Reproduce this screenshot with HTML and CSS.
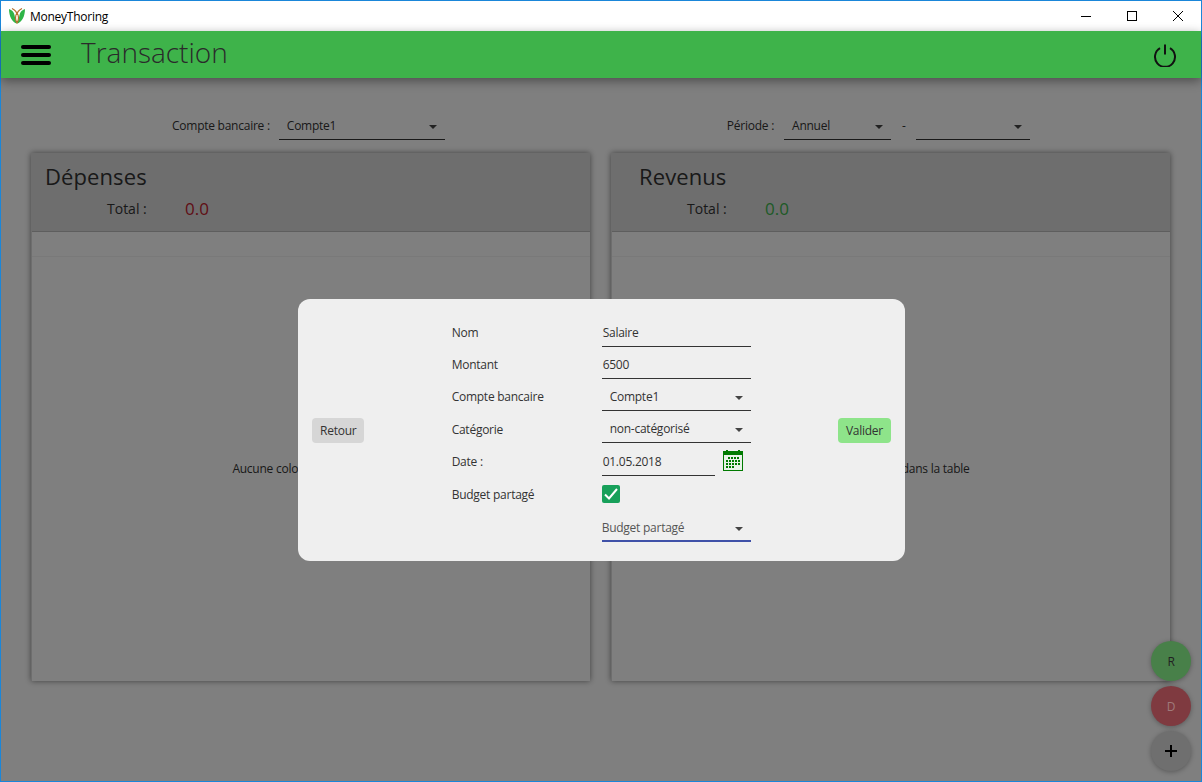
FILE: index.html
```html
<!DOCTYPE html>
<html lang="fr">
<head>
  <meta charset="UTF-8">
  <title>MoneyThoring</title>
  <link rel="stylesheet" href="styles.css">
</head>
<body>

<div id="window">
  <div id="titleBar">
    <svg class="appLogo" viewBox="0 0 16 16" width="16" height="16">
      <path d="M0 1C3 2 5 4 5.500 7C6 10 7 13 8 15.500C3 14.500 0 8 0 1z" fill="#2fb548"/>
      <path d="M16 1C13 2 11 4 10.500 7C10 10 9 13 8 15.500C13 14.500 16 8 16 1z" fill="#2fb548"/>
      <path d="M3 0.500C6 2 8 4 8 7C8 4 10 2 13 0.500M8 5C6 7.500 6 12 8 15C10 12 10 7.500 8 5z" fill="none" stroke="#b5702c" stroke-width="1.200"/>
    </svg>
    <span class="appName">MoneyThoring</span>
    <div class="winButtons">
      <svg width="46" height="30" viewBox="0 0 46 30"><path d="M18 15.500h10" stroke="#000" fill="none"/></svg>
      <svg width="46" height="30" viewBox="0 0 46 30"><rect x="18.500" y="10.500" width="9" height="9" stroke="#000" fill="none"/></svg>
      <svg width="46" height="30" viewBox="0 0 46 30"><path d="M18 10l10 10M28 10L18 20" stroke="#000" fill="none"/></svg>
    </div>
  </div>

  <div id="appBar">
    <div class="burger"><span></span><span></span><span></span></div>
    <h1>Transaction</h1>
    <svg class="power" viewBox="0 0 24 24" width="24" height="24" fill="none" stroke="#111" stroke-width="2">
      <path d="M7 5.200a10 10 0 1 0 10 0"/>
      <path d="M12 1.500v10"/>
    </svg>
  </div>

  <div id="main">
    <div class="filters">
      <div class="filterLeft">
        <label>Compte bancaire :</label>
        <div class="combo w166"><span>Compte1</span><i class="arrow"></i></div>
      </div>
      <div class="filterRight">
        <label>Période :</label>
        <div class="combo w107"><span>Annuel</span><i class="arrow"></i></div>
        <span class="dash">-</span>
        <div class="combo w114"><span></span><i class="arrow"></i></div>
      </div>
    </div>

    <div class="cards">
      <div class="card">
        <div class="cardHead">
          <h2>Dépenses</h2>
          <div class="total"><span class="totalLabel">Total :</span><span class="amount red">0.0</span></div>
        </div>
        <div class="tableBox">
          <div class="tableHead"></div>
          <div class="tableEmpty">Aucune colonne dans la table</div>
        </div>
      </div>
      <div class="card">
        <div class="cardHead revenus">
          <h2>Revenus</h2>
          <div class="total"><span class="totalLabel">Total :</span><span class="amount green">0.0</span></div>
        </div>
        <div class="tableBox">
          <div class="tableHead"></div>
          <div class="tableEmpty">Aucune colonne dans la table</div>
        </div>
      </div>
    </div>

    <div id="overlay">
      <div id="dialog">
        <button class="btn back">Retour</button>
        <div class="form">
          <label>Nom</label>
          <div class="field">Salaire</div>
          <label>Montant</label>
          <div class="field">6500</div>
          <label>Compte bancaire</label>
          <div class="combo field"><span>Compte1</span><i class="arrow"></i></div>
          <label>Catégorie</label>
          <div class="combo field"><span>non-catégorisé</span><i class="arrow"></i></div>
          <label>Date :</label>
          <div class="dateRow">
            <div class="field dateField">01.05.2018</div>
            <svg class="calendar" viewBox="0 0 20 21" width="20" height="21">
              <path d="M0 1h3V0h2v1h10V0h2v1h3v20H0z" fill="#007a00"/>
              <rect x="1" y="5" width="18" height="15" fill="#e8f2e8"/>
              <path d="M5 7h2v2H5zM8 7h2v2H8zM11 7h2v2h-2zM14 7h2v2h-2zM3 10h2v2H3zM6 10h2v2H6zM9 10h2v2H9zM12 10h2v2h-2zM15 10h2v2h-2zM3 13h2v2H3zM6 13h2v2H6zM9 13h2v2H9zM12 13h2v2h-2zM15 13h2v2h-2zM3 16h2v2H3zM6 16h2v2H6zM9 16h2v2H9z" fill="#007a00"/>
            </svg>
          </div>
          <label>Budget partagé</label>
          <div class="checkRow">
            <div class="check">
              <svg viewBox="0 0 18 18" width="18" height="18" fill="none" stroke="#fff" stroke-width="2"><path d="M3 9.500l4 4 8-9.500"/></svg>
            </div>
          </div>
          <span></span>
          <div class="combo field focused"><span>Budget partagé</span><i class="arrow"></i></div>
        </div>
        <button class="btn ok">Valider</button>
      </div>
    </div>

    <div class="fabs">
      <div class="fab fabR">R</div>
      <div class="fab fabD">D</div>
      <div class="fab fabPlus">
        <svg viewBox="0 0 12 12" width="12" height="12"><path d="M6 0v12M0 6h12" stroke="#000" stroke-width="2"/></svg>
      </div>
    </div>
  </div>
</div>

</body>
</html>
```

FILE: styles.css
```css
* {
  box-sizing: border-box;
}

body {
  margin: 0;
  font-family: "Open Sans", "Noto Sans", sans-serif;
  font-size: 12px;
  letter-spacing: -0.25px;
  color: #333;
  overflow: hidden;
}

#window {
  width: 1202px;
  height: 782px;
  border: 1px solid #1a86d9;
  display: flex;
  flex-direction: column;
  background-color: #fff;
}

#titleBar {
  height: 30px;
  display: flex;
  align-items: center;
  padding-left: 8px;
  background-color: #fff;
  flex-shrink: 0;
}

.appName {
  margin-left: 5px;
  color: #000;
}

.winButtons {
  margin-left: auto;
  display: flex;
}

#appBar {
  height: 47px;
  display: flex;
  align-items: center;
  background-color: #3eb34a;
  padding: 0 24px 0 20px;
  flex-shrink: 0;
  position: relative;
  z-index: 2;
  box-shadow: 0 3px 10px rgba(0, 0, 0, 0.4);
}

.burger {
  width: 30px;
}

.burger span {
  display: block;
  height: 4px;
  margin-bottom: 4px;
  background-color: #000;
  border-radius: 2px;
}

.burger span:last-child {
  margin-bottom: 0;
}

h1 {
  margin: -6px 0 0 30px;
  font-size: 28px;
  font-weight: 300;
  letter-spacing: 0;
  color: #2a2a2a;
}

.power {
  margin-left: auto;
}

#main {
  flex: 1;
  position: relative;
  padding: 0 30px;
}

.filters {
  height: 75px;
  display: flex;
  padding-top: 36px;
}

.filterLeft label {
  margin-right: 9px;
}

.filterLeft,
.filterRight {
  display: flex;
  align-items: flex-start;
  height: 26px;
  line-height: 24px;
}

.filterLeft {
  margin-left: 141px;
}

.filterRight {
  margin-left: 282px;
}

.filterRight label {
  margin-right: 10px;
}

.dash {
  margin: 0 10px 0 11px;
}

.combo {
  position: relative;
  height: 26px;
  padding-left: 8px;
  line-height: 24px;
  border-bottom: 1px solid #333;
}

.w166 {
  width: 166px;
}

.w107 {
  width: 107px;
}

.w114 {
  width: 114px;
}

.arrow {
  position: absolute;
  right: 8px;
  top: 11px;
  border-left: 4px solid transparent;
  border-right: 4px solid transparent;
  border-top: 4px solid #444;
}

.cards {
  display: flex;
  gap: 21px;
}

.card {
  width: 559px;
  height: 528px;
  background-color: #dcdcdc;
  box-shadow: 0 0 6px rgba(0, 0, 0, 0.5);
  display: flex;
  flex-direction: column;
}

.cardHead {
  height: 78px;
  padding: 8px 0 0 14px;
}

.cardHead.revenus {
  padding-left: 28px;
}

h2 {
  margin: 0;
  font-size: 22px;
  font-weight: 400;
  letter-spacing: 0.1px;
  line-height: 30px;
  color: #333;
}

.total {
  display: flex;
  align-items: center;
  padding-left: 62px;
  margin-top: 6px;
  font-size: 14px;
  letter-spacing: 0;
  line-height: 24px;
}

.revenus .total {
  padding-left: 48px;
}

.totalLabel {
  width: 78px;
}

.amount {
  font-size: 17px;
}

.red {
  color: #c0202c;
}

.green {
  color: #3db54d;
}

.tableBox {
  flex: 1;
  margin-left: 1px;
  background-color: #fff;
  border-top: 1px solid #bdbdbd;
  display: flex;
  flex-direction: column;
}

.tableHead {
  height: 25px;
  border-bottom: 1px solid #f2f2f2;
}

.tableEmpty {
  flex: 1;
  display: flex;
  align-items: center;
  justify-content: center;
  padding-bottom: 2px;
}

#overlay {
  position: absolute;
  left: 0;
  right: 0;
  top: 0;
  bottom: 0;
  background-color: rgba(0, 0, 0, 0.5);
  z-index: 1;
  display: flex;
  justify-content: center;
  align-items: center;
  padding-top: 1px;
  padding-left: 1px;
}

#dialog {
  width: 607px;
  height: 262px;
  background-color: #efefef;
  border-radius: 12px;
  display: flex;
  align-items: center;
  justify-content: space-between;
  padding: 0 14px;
}

.btn {
  height: 25px;
  border: none;
  border-radius: 4px;
  padding: 0 8px;
  font-family: inherit;
  font-size: 12px;
  letter-spacing: inherit;
  color: #333;
}

.back {
  background-color: #d6d6d6;
}

.ok {
  background-color: #8ee48a;
}

.form {
  width: 299px;
  display: grid;
  grid-template-columns: 150px 149px;
  grid-template-rows: 32px 32px 32px 33px 32px 34px 32px;
  align-items: center;
}

.field {
  height: 25px;
  line-height: 22px;
  padding-left: 1px;
  border-bottom: 1px solid #333;
  margin-top: 3px;
}

.field .arrow {
  top: 10px;
}

.combo.field {
  padding-left: 8px;
}

.combo.focused {
  border-bottom: 2px solid #3f51a8;
  padding-left: 0;
  color: #555;
}

.dateRow {
  display: flex;
  align-items: center;
}

.dateField {
  width: 113px;
}

.calendar {
  margin-left: 8px;
  margin-top: -2px;
}

.check {
  width: 18px;
  height: 18px;
  margin-top: -2px;
  background-color: #17a05a;
  border-radius: 2px;
}

.check svg {
  display: block;
}

.fabs {
  position: absolute;
  right: 10px;
  bottom: 10px;
  z-index: 3;
  display: flex;
  flex-direction: column;
  gap: 5px;
}

.fab {
  width: 40px;
  height: 40px;
  border-radius: 50%;
  display: flex;
  align-items: center;
  justify-content: center;
  box-shadow: 0 1px 5px rgba(0, 0, 0, 0.3);
  color: #222;
}

.fabR {
  background-color: #488049;
}

.fabD {
  background-color: #7f3a40;
  color: #a07a7c;
}

.fabPlus {
  background-color: #6f6f6f;
}
```
